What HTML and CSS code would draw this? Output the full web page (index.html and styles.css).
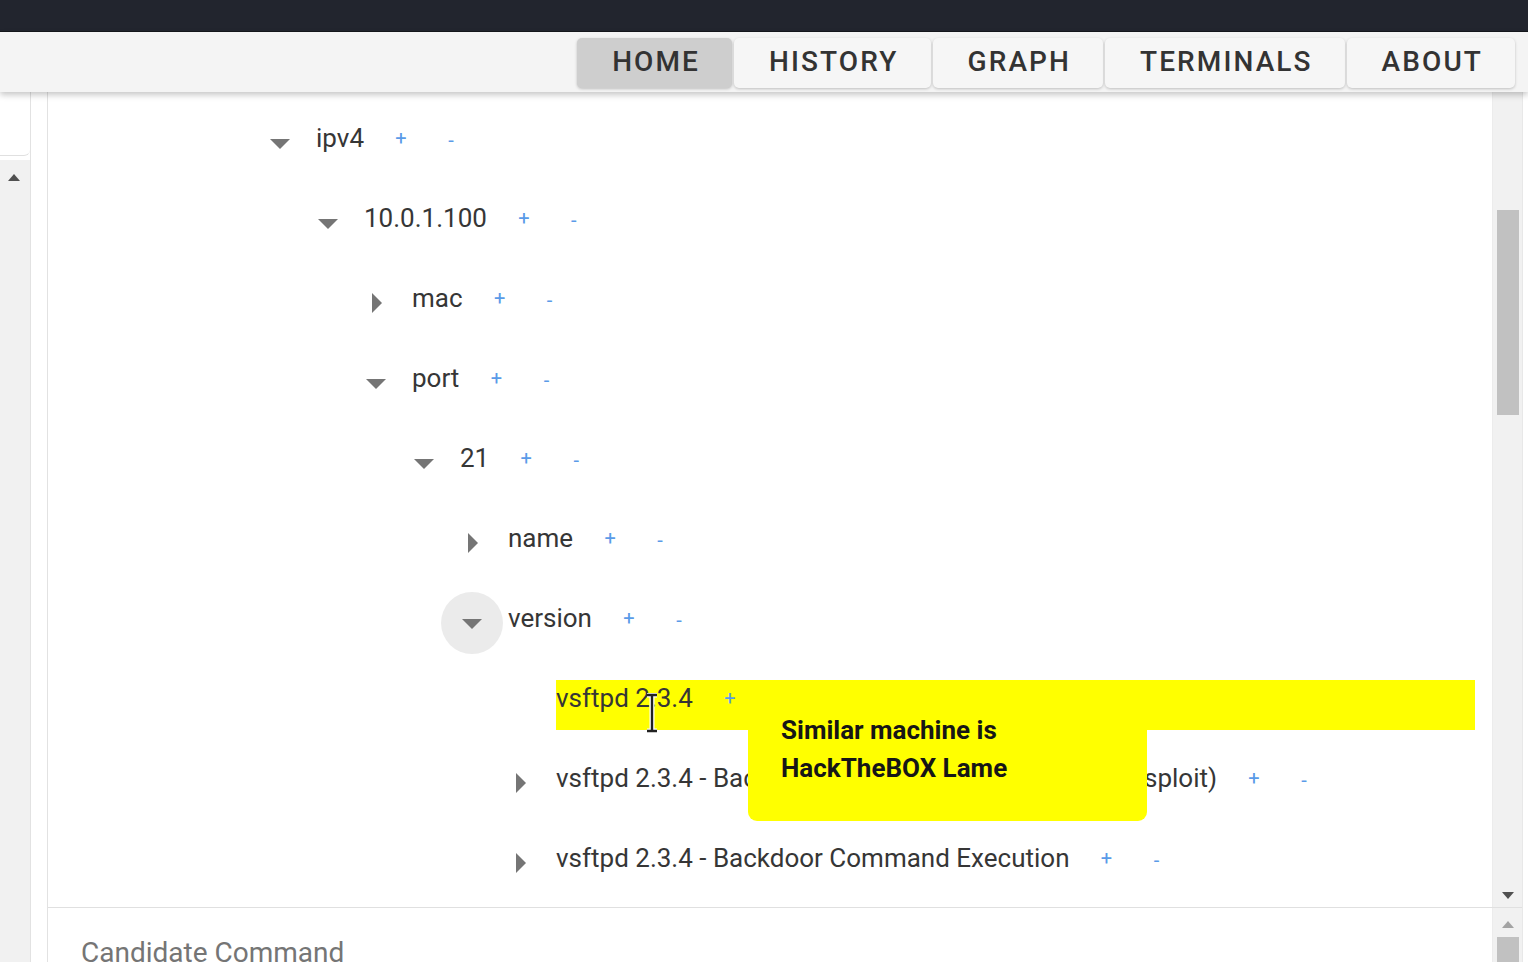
FILE: index.html
```html
<!DOCTYPE html>
<html lang="en">
<head>
<meta charset="utf-8">
<title>Recon tree</title>
<link rel="stylesheet" href="styles.css">
</head>
<body>
<div class="topbar"></div>
<nav class="nav">
  <a class="tab active">HOME</a>
  <a class="tab">HISTORY</a>
  <a class="tab">GRAPH</a>
  <a class="tab">TERMINALS</a>
  <a class="tab">ABOUT</a>
</nav>
<div class="body">
  <aside class="side">
    <div class="side-top"></div>
    <div class="side-track"><span class="arrow-up dark"></span></div>
  </aside>
  <div class="gutter"></div>
  <main class="main">
    <section class="tree-area">
      <div class="tree">
        <ul class="nodes root">
          <li>
            <div class="row"><span class="toggle"><svg viewBox="0 0 24 24"><path d="M7 10l5 5 5-5z"/></svg></span><div class="label"><span class="name">ipv4</span><span class="btn plus">+</span><span class="btn minus">-</span></div></div>
            <ul class="nodes">
              <li>
                <div class="row"><span class="toggle"><svg viewBox="0 0 24 24"><path d="M7 10l5 5 5-5z"/></svg></span><div class="label"><span class="name">10.0.1.100</span><span class="btn plus">+</span><span class="btn minus">-</span></div></div>
                <ul class="nodes">
                  <li>
                    <div class="row"><span class="toggle"><svg viewBox="0 0 24 24"><path d="M10 17l5-5-5-5v10z"/></svg></span><div class="label"><span class="name">mac</span><span class="btn plus">+</span><span class="btn minus">-</span></div></div>
                  </li>
                  <li>
                    <div class="row"><span class="toggle"><svg viewBox="0 0 24 24"><path d="M7 10l5 5 5-5z"/></svg></span><div class="label"><span class="name">port</span><span class="btn plus">+</span><span class="btn minus">-</span></div></div>
                    <ul class="nodes">
                      <li>
                        <div class="row"><span class="toggle"><svg viewBox="0 0 24 24"><path d="M7 10l5 5 5-5z"/></svg></span><div class="label"><span class="name">21</span><span class="btn plus">+</span><span class="btn minus">-</span></div></div>
                        <ul class="nodes">
                          <li>
                            <div class="row"><span class="toggle"><svg viewBox="0 0 24 24"><path d="M10 17l5-5-5-5v10z"/></svg></span><div class="label"><span class="name">name</span><span class="btn plus">+</span><span class="btn minus">-</span></div></div>
                          </li>
                          <li>
                            <div class="row"><span class="toggle hover"><svg viewBox="0 0 24 24"><path d="M7 10l5 5 5-5z"/></svg></span><div class="label"><span class="name">version</span><span class="btn plus">+</span><span class="btn minus">-</span></div></div>
                            <ul class="nodes">
                              <li>
                                <div class="row"><span class="leaf-space"></span><div class="label highlight"><span class="name">vsftpd 2.3.4</span><span class="btn plus">+</span><span class="btn minus">-</span>
                                  <div class="tooltip">Similar machine is<br>HackTheBOX Lame</div>
                                  <svg class="cursor" viewBox="0 0 14 40"><path d="M2 2h10M7 2v36M2 38h10" stroke="#fff" stroke-width="5" fill="none"/><path d="M2 2h10M7 2v36M2 38h10" stroke="#222" stroke-width="2.4" fill="none"/></svg>
                                </div></div>
                              </li>
                              <li>
                                <div class="row"><span class="toggle"><svg viewBox="0 0 24 24"><path d="M10 17l5-5-5-5v10z"/></svg></span><div class="label"><span class="name">vsftpd 2.3.4 - Backdoor Command Execution (Metasploit)</span><span class="btn plus">+</span><span class="btn minus">-</span></div></div>
                              </li>
                              <li>
                                <div class="row"><span class="toggle"><svg viewBox="0 0 24 24"><path d="M10 17l5-5-5-5v10z"/></svg></span><div class="label"><span class="name">vsftpd 2.3.4 - Backdoor Command Execution</span><span class="btn plus">+</span><span class="btn minus">-</span></div></div>
                              </li>
                            </ul>
                          </li>
                        </ul>
                      </li>
                    </ul>
                  </li>
                </ul>
              </li>
            </ul>
          </li>
        </ul>
      </div>
      <div class="scrollbar">
        <div class="thumb tree-thumb"></div>
        <span class="arrow-down"></span>
      </div>
    </section>
    <section class="bottom-area">
      <div class="bottom-content">
        <div class="candidate">Candidate Command</div>
      </div>
      <div class="scrollbar">
        <span class="arrow-up"></span>
        <div class="thumb bottom-thumb"></div>
      </div>
    </section>
  </main>
</div>
</body>
</html>
```
FILE: styles.css
```css
* { box-sizing: border-box; }
html, body { margin: 0; padding: 0; }
body {
  width: 1528px;
  height: 962px;
  overflow: hidden;
  background: #ffffff;
  font-family: Roboto, "Noto Sans", "Liberation Sans", sans-serif;
  color: #3a3a3a;
  display: flex;
  flex-direction: column;
}
.topbar {
  height: 32px;
  background: #22252e;
  border-bottom: 1px solid #15171c;
  flex: none;
}
.nav {
  height: 60px;
  flex: none;
  background: #f4f4f4;
  display: flex;
  justify-content: flex-end;
  align-items: flex-start;
  padding: 6px 13px 0 0;
  gap: 2px;
  box-shadow: 0 3px 6px rgba(0,0,0,0.22);
  position: relative;
  z-index: 3;
}
.tab {
  height: 50px;
  padding: 0 32px 4px 35px;
  display: flex;
  align-items: center;
  background: #f6f6f6;
  border-radius: 5px;
  box-shadow: 0 1px 3px rgba(0,0,0,0.22);
  font-size: 28px;
  font-weight: 500;
  letter-spacing: 2.1px;
  color: #333333;
}
.tab.active { background: #cecece; }

.body {
  flex: 1;
  display: flex;
  min-height: 0;
}
.side {
  width: 31px;
  flex: none;
  border-right: 1px solid #e2e2e2;
  display: flex;
  flex-direction: column;
}
.side-top {
  height: 64px;
  border-bottom: 1px solid #e0e0e0;
  border-bottom-right-radius: 6px;
  background: #fff;
}
.side-track {
  flex: 1;
  margin-top: 4px;
  background: #f1f1f1;
  display: flex;
  justify-content: center;
  padding: 14px 2px 0 0;
}
.gutter { width: 16px; flex: none; }
.main {
  flex: 1;
  display: flex;
  flex-direction: column;
  border-left: 1px solid #e2e2e2;
  border-right: 1px solid #e8e8e8;
  margin-right: 5px;
  min-width: 0;
}
.tree-area {
  height: 815px;
  flex: none;
  display: flex;
  overflow: hidden;
}
.tree {
  flex: 1;
  padding-top: 9px;
  overflow: hidden;
}
.nodes {
  list-style: none;
  margin: 0;
  padding: 0 0 0 48px;
}
.nodes.root { padding-left: 208px; }
.row {
  height: 80px;
  display: flex;
  align-items: center;
}
.toggle {
  width: 62px;
  height: 62px;
  margin: 3px -7px 0;
  flex: none;
  border-radius: 50%;
  display: flex;
  align-items: center;
  justify-content: center;
}
.toggle.hover { background: #ebebeb; }
.toggle svg { width: 48px; height: 48px; fill: #757575; }
.leaf-space { width: 48px; flex: none; }
.label {
  flex: 1;
  position: relative;
  height: 50px;
  margin: 8px 17px 0 12px;
  padding-bottom: 14px;
  font-size: 26px;
  line-height: 36px;
  white-space: nowrap;
  color: #363636;
}
.label.highlight { background: #ffff00; }
.btn {
  display: inline-block;
  width: 24px;
  text-align: center;
  font-size: 20px;
  color: #5a9be8;
}
.plus { margin-left: 25px; vertical-align: 2px; }
.minus { margin-left: 26px; }
.tooltip {
  position: absolute;
  left: 192px;
  top: 20px;
  width: 399px;
  height: 121px;
  padding: 11px 20px 0 33px;
  background: #ffff00;
  border-radius: 0 0 9px 9px;
  font-size: 26px;
  font-weight: 700;
  line-height: 38px;
  color: #161616;
  z-index: 2;
}
.cursor {
  position: absolute;
  left: 89px;
  top: 13px;
  width: 14px;
  height: 40px;
  z-index: 3;
}
.scrollbar {
  width: 30px;
  flex: none;
  background: #f1f1f1;
  border-left: 1px solid #ececec;
  display: flex;
  flex-direction: column;
  align-items: center;
}
.thumb {
  width: 22px;
  background: #c1c1c1;
}
.tree-thumb { margin-top: 118px; height: 205px; }
.arrow-down {
  margin-top: auto;
  margin-bottom: 8px;
  width: 0; height: 0;
  border-left: 6px solid transparent;
  border-right: 6px solid transparent;
  border-top: 7px solid #505050;
}
.arrow-up {
  width: 0; height: 0;
  border-left: 6px solid transparent;
  border-right: 6px solid transparent;
  border-bottom: 7px solid #a3a3a3;
  margin-top: 13px;
}
.arrow-up.dark { border-bottom-color: #505050; margin-top: 0; }
.bottom-area {
  flex: 1;
  display: flex;
  border-top: 1px solid #e0e0e0;
  min-height: 0;
  overflow: hidden;
}
.bottom-content {
  flex: 1;
  padding: 28px 0 0 33px;
}
.candidate {
  font-size: 28px;
  color: #757575;
}
.bottom-thumb { margin-top: 9px; height: 40px; }
```
